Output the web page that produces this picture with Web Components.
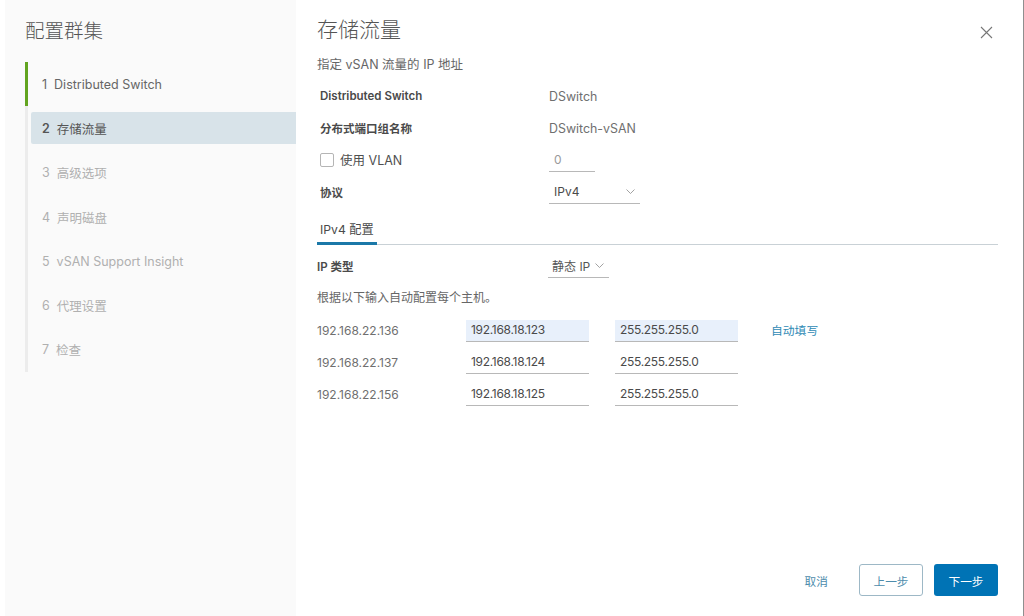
<!DOCTYPE html>
<html lang="zh-CN"><head><meta charset="utf-8">
<style>
html,body{margin:0;height:100%;background:#fff;overflow:hidden}
body{font-family:Inter,"Noto Sans CJK SC",sans-serif;color:#565656}
</style></head><body>
<wizard-dialog>
  <wizard-nav slot="nav" heading="配置群集">
    <wizard-step state="done" num="1">Distributed Switch</wizard-step>
    <wizard-step state="active" num="2">存储流量</wizard-step>
    <wizard-step num="3">高级选项</wizard-step>
    <wizard-step num="4">声明磁盘</wizard-step>
    <wizard-step num="5">vSAN Support Insight</wizard-step>
    <wizard-step num="6">代理设置</wizard-step>
    <wizard-step num="7">检查</wizard-step>
  </wizard-nav>
  <storage-page></storage-page>
</wizard-dialog>
<script>
const FONT='Inter,"Noto Sans CJK SC",sans-serif';
function def(name,html){
  customElements.define(name,class extends HTMLElement{
    constructor(){super();this.attachShadow({mode:'open'});}
    connectedCallback(){this.shadowRoot.innerHTML=typeof html==='function'?html(this):html;}
  });
}
const chev=(w=9)=>`<svg width="${w}" height="5" viewBox="0 0 9 5" fill="none" stroke="#8a8a8a" stroke-width=".8"><path d="M.5.5 4.5 4.5 8.5.5"/></svg>`;

def('wizard-dialog',`<style>
:host{display:flex;height:616px;width:1024px;box-sizing:border-box;border-right:1px solid #8f8f8f;background:#fff}
.nav{flex:none;width:291px;margin-left:5px;background:#fafafa;height:100%}
.main{flex:1;min-width:0}
</style><div class="nav"><slot name="nav"></slot></div><div class="main"><slot></slot></div>`);

def('wizard-nav',h=>`<style>
:host{display:block;padding:16px 0 0 20px}
h2{margin:0 0 16px;font:300 19.5px/30px ${FONT};color:#555}
.list{display:flex;flex-direction:column;border-left:3px solid #ececec}
</style><h2>${h.getAttribute('heading')}</h2><div class="list"><slot></slot></div>`);

def('wizard-step',h=>{const s=h.getAttribute('state')||'';return `<style>
:host{display:block;height:44.3px;margin-left:-3px;font-size:12.5px}
.bar{height:100%;display:flex;box-sizing:border-box;align-items:center;border-left:3px solid ${s==='done'?'#62a420':'transparent'}}
.row{flex:1;height:32px;margin-left:3px;padding-left:11px;display:flex;align-items:center;gap:7px;
 color:${s==='done'?'#666':s==='active'?'#555':'#b0b0b0'};background:${s==='active'?'#d8e3e9':'transparent'};border-radius:2px 0 0 2px}
b{font-weight:${s==='active'?600:400}}
</style><div class="bar"><div class="row"><b>${h.getAttribute('num')}</b><span><slot></slot></span></div></div>`});

def('form-row',h=>`<style>
:host{display:grid;grid-template-columns:${h.getAttribute('cols')||'229px 1fr'};align-items:center;height:32px;padding-left:${h.getAttribute('pad')||3}px;font-size:12.4px;color:#565656}
::slotted([slot=label]){font-weight:600;color:#4a4a4a;font-size:11.5px}
::slotted(.plain){font-weight:400;font-size:12.5px}
</style><slot name="label"></slot><slot></slot>`);

def('line-field',h=>`<style>
:host{display:flex;align-items:center;box-sizing:border-box;width:${h.getAttribute('w')}px;height:${h.getAttribute('h')||22}px;border-bottom:1px solid #b8b8b8;padding-left:${h.getAttribute('pad')||5}px;
 font-size:12px;color:${h.getAttribute('color')||'#4a4a4a'};background:${h.hasAttribute('filled')?'#e8f0fb':'transparent'}}
.c{flex:1}
.ch{display:flex;margin-right:${h.getAttribute('chev')||0}px}
</style><span class="c"><slot></slot></span>${h.hasAttribute('chev')?`<span class="ch">${chev()}</span>`:''}`);

def('check-box',`<style>
:host{display:inline-flex;align-items:center;gap:6px}
i{display:block;width:12px;height:12px;border:1px solid #b5b5b5;border-radius:2px;background:#fff}
span{color:#4f4f4f}
</style><i></i><span><slot></slot></span>`);

def('tab-bar',`<style>
:host{display:block;border-bottom:1px solid #c9d1d6;height:30px;box-sizing:border-box;margin:7px 0 5px 0}
div{display:inline-block;box-sizing:border-box;height:30px;padding:0 3px;width:60px;line-height:30px;border-bottom:3px solid #1b78a8;font-size:12.2px;color:#4a4a4a;white-space:nowrap}
</style><div><slot></slot></div>`);

def('ip-row',h=>`<style>
:host{display:flex;align-items:center;height:32px;font-size:12px;color:#6f6f6f}
.ip{width:149px}
.gap{width:26px}
line-field{margin-top:2px;padding-bottom:2px;letter-spacing:-.3px}
a{margin-left:33px;margin-bottom:2px;color:#2f8ab5;font-size:11.8px}
</style><span class="ip">${h.getAttribute('host')}</span>
<line-field w="123" ${h.hasAttribute('filled')?'filled':''}>${h.getAttribute('ip')}</line-field><span class="gap"></span>
<line-field w="123" ${h.hasAttribute('filled')?'filled':''}>255.255.255.0</line-field>${h.hasAttribute('filled')?'<a>自动填写</a>':''}`);

def('wizard-button',h=>{const k=h.getAttribute('kind');return `<style>
:host{display:inline-flex;align-items:center;justify-content:center;box-sizing:border-box;height:32px;width:64px;border-radius:3px;font-size:11.7px;
 ${k==='primary'?'background:#0073b5;color:#fff;':k==='outline'?'border:1px solid #9db8c6;color:#4d8cac;':'color:#4d8cac;width:auto;'}}
</style><slot></slot>`});

def('storage-page',`<style>
:host{display:flex;flex-direction:column;height:616px;box-sizing:border-box;padding:16px 25px 20px 21px;position:relative}
.close{position:absolute;top:26px;right:30px;display:flex}
h1{margin:0;font:300 21px/28px ${FONT};color:#555}
p{margin:0;font-size:12px;line-height:20px;color:#666}
.sub{margin:11px 0 5px;font-size:12.5px}
.form{display:flex;flex-direction:column}
.note{height:32px;line-height:32px}
.spacer{flex:1}
.foot{display:flex;align-items:center;justify-content:flex-end;gap:11px}
.cancel{margin-right:20px}
.v{color:#6f6f6f}
</style>
<span class="close"><svg width="13" height="13" viewBox="0 0 13 13" fill="none" stroke="#777" stroke-width="1.1"><path d="M1 1 12 12M12 1 1 12"/></svg></span>
<h1>存储流量</h1>
<p class="sub">指定 vSAN 流量的 IP 地址</p>
<div class="form">
<form-row><span slot="label">Distributed Switch</span><span class="v">DSwitch</span></form-row>
<form-row><span slot="label">分布式端口组名称</span><span class="v">DSwitch-vSAN</span></form-row>
<form-row><span slot="label" class="plain"><check-box>使用 VLAN</check-box></span><line-field w="46" color="#9a9a9a" h="24">0</line-field></form-row>
<form-row><span slot="label">协议</span><line-field w="91" chev="5" h="23">IPv4</line-field></form-row>
<tab-bar>IPv4 配置</tab-bar>
<form-row cols="231px 1fr" pad="0"><span slot="label">IP 类型</span><line-field w="61" chev="5" h="23" pad="4" color="#565656">静态 IP</line-field></form-row>
<p class="note">根据以下输入自动配置每个主机。</p>
<ip-row host="192.168.22.136" ip="192.168.18.123" filled></ip-row>
<ip-row host="192.168.22.137" ip="192.168.18.124"></ip-row>
<ip-row host="192.168.22.156" ip="192.168.18.125"></ip-row>
</div>
<div class="spacer"></div>
<div class="foot"><wizard-button class="cancel">取消</wizard-button><wizard-button kind="outline">上一步</wizard-button><wizard-button kind="primary">下一步</wizard-button></div>`);
</script>
</body></html>
